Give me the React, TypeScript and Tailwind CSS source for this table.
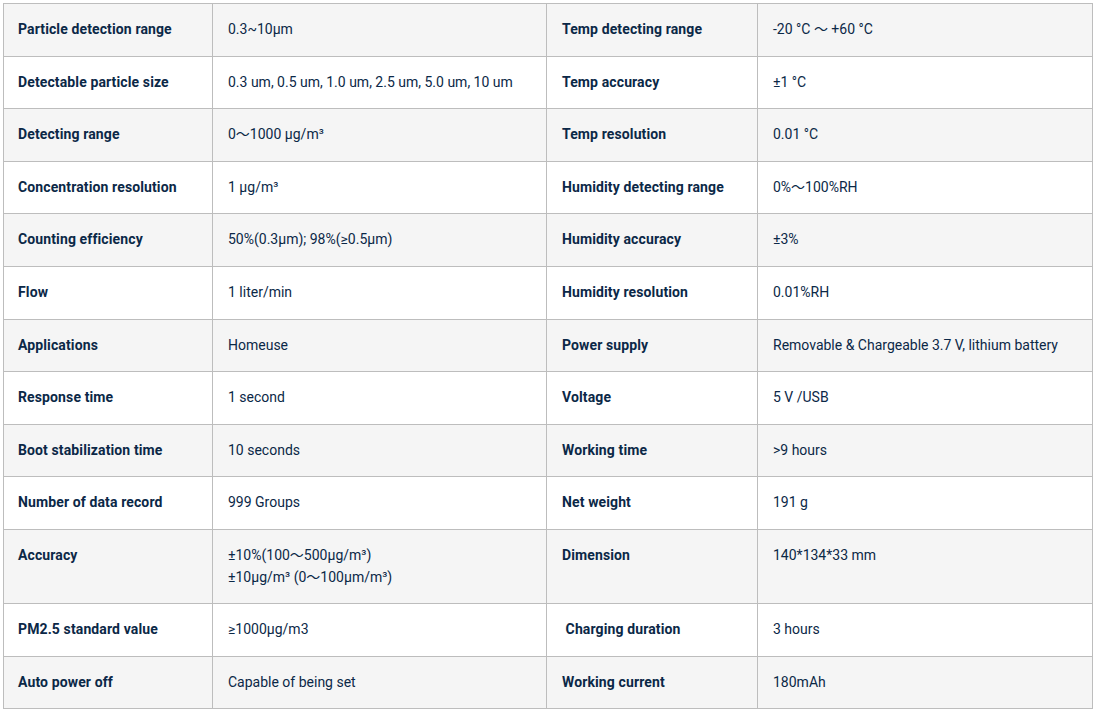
import React from "react";

const rows: [string, React.ReactNode, string, React.ReactNode][] = [
  ["Particle detection range", "0.3~10μm", "Temp detecting range", "-20 °C ～ +60 °C"],
  ["Detectable particle size", "0.3 um, 0.5 um, 1.0 um, 2.5 um, 5.0 um, 10 um", "Temp accuracy", "±1 °C"],
  ["Detecting range", "0～1000 μg/m³", "Temp resolution", "0.01 °C"],
  ["Concentration resolution", "1 μg/m³", "Humidity detecting range", "0%～100%RH"],
  ["Counting efficiency", "50%(0.3μm); 98%(≥0.5μm)", "Humidity accuracy", "±3%"],
  ["Flow", "1 liter/min", "Humidity resolution", "0.01%RH"],
  ["Applications", "Homeuse", "Power supply", "Removable & Chargeable 3.7 V, lithium battery"],
  ["Response time", "1 second", "Voltage", "5 V /USB"],
  ["Boot stabilization time", "10 seconds", "Working time", ">9 hours"],
  ["Number of data record", "999 Groups", "Net weight", "191 g"],
  [
    "Accuracy",
    <>
      ±10%(100～500μg/m³)
      <br />
      ±10μg/m³ (0～100μm/m³)
    </>,
    "Dimension",
    "140*134*33 mm",
  ],
  ["PM2.5 standard value", "≥1000μg/m3", "\u00a0Charging duration", "3 hours"],
  ["Auto power off", "Capable of being set", "Working current", "180mAh"],
];

export default function App() {
  return (
    <div
      className="bg-white w-[1095px] h-[711px] pt-[3px] pl-[3px]"
      style={{ fontFamily: "Roboto, 'Noto Sans CJK JP', 'Liberation Sans', sans-serif" }}
    >
      <table className="border-collapse w-[1089px] table-fixed text-[14px] leading-[21.6px] text-[#0b2847]">
        <colgroup>
          <col className="w-[209px]" />
          <col className="w-[334px]" />
          <col className="w-[211px]" />
          <col className="w-[335px]" />
        </colgroup>
        <tbody>
          {rows.map((r, i) => (
            <tr key={i} className={i % 2 === 0 ? "bg-[#f5f5f5]" : "bg-white"}>
              <td className="border border-[#bdbdbd] px-[14px] py-[15px] align-top font-bold tracking-[0.12px]">{r[0]}</td>
              <td className="border border-[#bdbdbd] px-[15px] py-[15px] align-top font-normal">{r[1]}</td>
              <td className="border border-[#bdbdbd] px-[15px] py-[15px] align-top font-bold tracking-[0.12px]">{r[2]}</td>
              <td className="border border-[#bdbdbd] px-[15px] py-[15px] align-top font-normal">{r[3]}</td>
            </tr>
          ))}
        </tbody>
      </table>
    </div>
  );
}
